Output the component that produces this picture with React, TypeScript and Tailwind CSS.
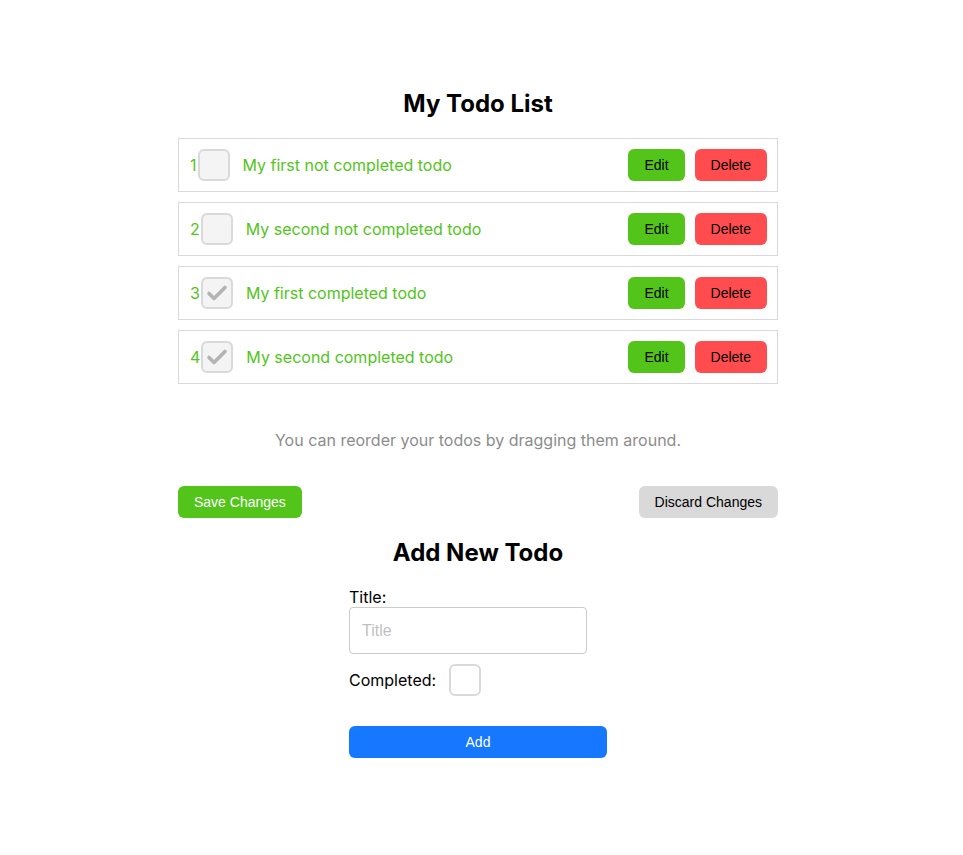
import React from 'react';

type Todo = {
  id: number;
  title: string;
  completed: boolean;
};

const todos: Todo[] = [
  { id: 1, title: 'My first not completed todo', completed: false },
  { id: 2, title: 'My second not completed todo', completed: false },
  { id: 3, title: 'My first completed todo', completed: true },
  { id: 4, title: 'My second completed todo', completed: true },
];

function CheckBox({ checked, white }: { checked?: boolean; white?: boolean }) {
  return (
    <span
      className={`flex h-8 w-8 shrink-0 items-center justify-center rounded-md border-2 border-[#d9d9d9] ${
        white ? 'bg-white' : 'bg-[#f4f4f4]'
      }`}
    >
      {checked && (
        <svg width="24" height="24" viewBox="0 0 24 24" fill="none">
          <path d="M4 12.5l5 5L20 6.5" stroke="#b3b3b3" strokeWidth="3.6" strokeLinecap="round" strokeLinejoin="round" />
        </svg>
      )}
    </span>
  );
}

const btn = "h-8 px-4 rounded-md text-sm font-['Liberation_Sans',Arial,sans-serif]";

export default function App() {
  return (
    <div className="min-h-screen bg-white font-['Inter',sans-serif]">
      <div className="ml-[178px] w-[600px] pt-[89px]">
        <h1 className="text-center text-2xl font-bold leading-[30px] text-black">My Todo List</h1>

        <ul className="mt-[19px] flex flex-col gap-[10px]">
          {todos.map(todo => (
            <li
              key={todo.id}
              className="flex h-[54px] items-center border border-[#d9d9d9] pl-[11px] pr-[10px]"
            >
              <span className="text-base text-[#52c41a]">{todo.id}</span>
              <span className="ml-px">
                <CheckBox checked={todo.completed} />
              </span>
              <span className="ml-[13px] text-base text-[#52c41a]">{todo.title}</span>
              <div className="ml-auto flex gap-[10px]">
                <button className={`${btn} bg-[#52c41a] text-black`}>Edit</button>
                <button className={`${btn} bg-[#ff4d4f] text-black`}>Delete</button>
              </div>
            </li>
          ))}
        </ul>

        <p className="mt-11 text-center text-base leading-6 text-[#8c8c8c]">
          You can reorder your todos by dragging them around.
        </p>

        <div className="mt-[34px] flex justify-between">
          <button className={`${btn} bg-[#52c41a] text-white`}>Save Changes</button>
          <button className={`${btn} bg-[#d9d9d9] text-black`}>Discard Changes</button>
        </div>

        <h2 className="mt-5 text-center text-2xl font-bold leading-[30px] text-black">Add New Todo</h2>

        <form className="ml-[171px] mt-[19px] w-[258px]">
          <label className="block text-base leading-5 text-black">Title:</label>
          <input
            placeholder="Title"
            className="h-[47px] w-[238px] rounded border border-[#cccccc] px-3 text-base font-['Liberation_Sans',Arial,sans-serif] outline-none placeholder:text-[#bfbfbf]"
          />
          <div className="mt-[10px] flex items-center gap-[13px]">
            <span className="text-base text-black">Completed:</span>
            <CheckBox white />
          </div>
          <button type="button" className={`${btn} mt-[30px] w-[258px] bg-[#1677ff] text-white`}>
            Add
          </button>
        </form>
      </div>
    </div>
  );
}
